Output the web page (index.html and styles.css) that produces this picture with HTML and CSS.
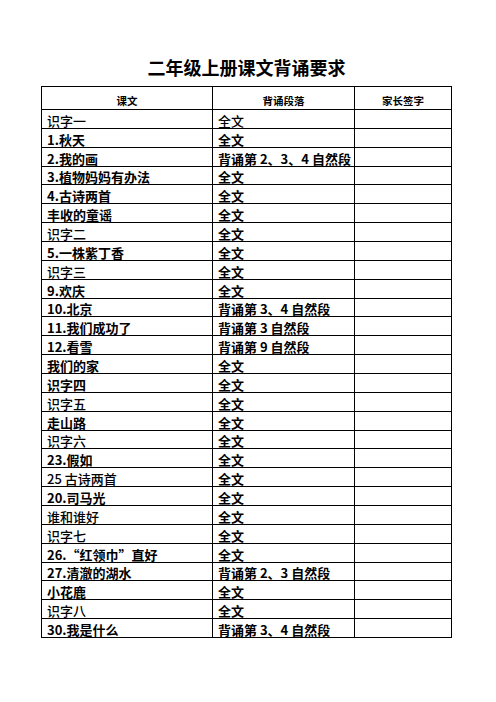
FILE: index.html
```html
<!DOCTYPE html>
<html lang="zh">
<head>
<meta charset="utf-8">
<title>二年级上册课文背诵要求</title>
<link rel="stylesheet" href="styles.css">
</head>
<body>
<div class="page">
  <h1 class="title">二年级上册课文背诵要求</h1>
  <div class="sheet">
    <div class="cell head">课文</div>
    <div class="cell head">背诵段落</div>
    <div class="cell head">家长签字</div>

    <div class="cell">识字一</div><div class="cell">全文</div><div class="cell"></div>
    <div class="cell b">1.秋天</div><div class="cell b">全文</div><div class="cell"></div>
    <div class="cell b">2.我的画</div><div class="cell b">背诵第 2、3、4 自然段</div><div class="cell"></div>
    <div class="cell b">3.植物妈妈有办法</div><div class="cell b">全文</div><div class="cell"></div>
    <div class="cell b">4.古诗两首</div><div class="cell b">全文</div><div class="cell"></div>
    <div class="cell b">丰收的童谣</div><div class="cell b">全文</div><div class="cell"></div>
    <div class="cell">识字二</div><div class="cell b">全文</div><div class="cell"></div>
    <div class="cell b">5.一株紫丁香</div><div class="cell b">全文</div><div class="cell"></div>
    <div class="cell">识字三</div><div class="cell b">全文</div><div class="cell"></div>
    <div class="cell b">9.欢庆</div><div class="cell b">全文</div><div class="cell"></div>
    <div class="cell b">10.北京</div><div class="cell b">背诵第 3、4 自然段</div><div class="cell"></div>
    <div class="cell b">11.我们成功了</div><div class="cell b">背诵第 3 自然段</div><div class="cell"></div>
    <div class="cell b">12.看雪</div><div class="cell b">背诵第 9 自然段</div><div class="cell"></div>
    <div class="cell b">我们的家</div><div class="cell b">全文</div><div class="cell"></div>
    <div class="cell b">识字四</div><div class="cell b">全文</div><div class="cell"></div>
    <div class="cell">识字五</div><div class="cell b">全文</div><div class="cell"></div>
    <div class="cell b">走山路</div><div class="cell b">全文</div><div class="cell"></div>
    <div class="cell">识字六</div><div class="cell b">全文</div><div class="cell"></div>
    <div class="cell b">23.假如</div><div class="cell b">全文</div><div class="cell"></div>
    <div class="cell">25 古诗两首</div><div class="cell b">全文</div><div class="cell"></div>
    <div class="cell b">20.司马光</div><div class="cell b">全文</div><div class="cell"></div>
    <div class="cell">谁和谁好</div><div class="cell b">全文</div><div class="cell"></div>
    <div class="cell">识字七</div><div class="cell b">全文</div><div class="cell"></div>
    <div class="cell b">26.“红领巾”直好</div><div class="cell b">全文</div><div class="cell"></div>
    <div class="cell b">27.清澈的湖水</div><div class="cell b">背诵第 2、3 自然段</div><div class="cell"></div>
    <div class="cell b">小花鹿</div><div class="cell b">全文</div><div class="cell"></div>
    <div class="cell">识字八</div><div class="cell b">全文</div><div class="cell"></div>
    <div class="cell b">30.我是什么</div><div class="cell b">背诵第 3、4 自然段</div><div class="cell"></div>
  </div>
</div>
</body>
</html>
```

FILE: styles.css
```css
html, body {
  margin: 0;
  padding: 0;
  background: #ffffff;
}

body {
  font-family: "Noto Sans CJK SC", "Noto Sans", sans-serif;
  color: #000000;
}

.page {
  padding: 56px 0 0 41px;
}

.title {
  margin: 0 0 8px 0;
  width: 411px;
  text-align: center;
  font-size: 18px;
  line-height: 22px;
  font-weight: 700;
}

.sheet {
  display: grid;
  grid-template-columns: 170px 141px 96px;
  grid-template-rows: 22px repeat(28, 17.86px);
  gap: 1px;
  padding: 1px;
  width: max-content;
  background: #000000;
}

.cell {
  background: #ffffff;
  display: flex;
  align-items: flex-end;
  padding: 0 0 0 5px;
  font-size: 13px;
  line-height: 14px;
  font-weight: 500;
  white-space: nowrap;
  overflow: visible;
}

.cell.b {
  font-weight: 700;
}

.head {
  justify-content: center;
  align-items: center;
  padding: 5px 0 0 0;
  font-size: 10.5px;
  font-weight: 700;
}
```
